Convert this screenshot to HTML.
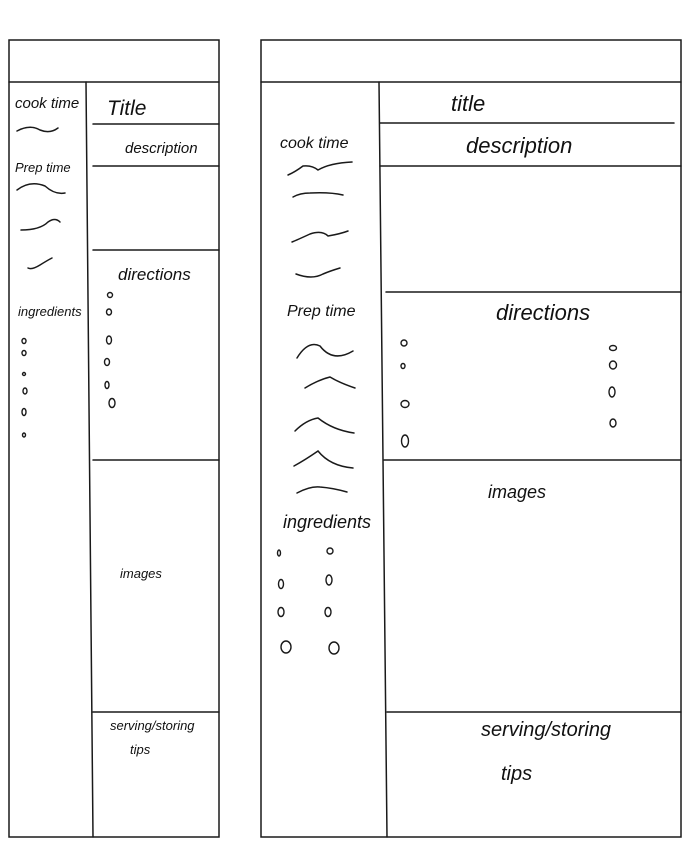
<!DOCTYPE html>
<html><head><meta charset="utf-8"><style>
html,body{margin:0;padding:0;background:#fff;width:694px;height:855px;overflow:hidden}
svg{display:block}
text{font-family:"Liberation Sans",sans-serif;fill:#111;font-style:italic}
</style></head><body>
<svg width="694" height="855" viewBox="0 0 694 855" xmlns="http://www.w3.org/2000/svg">
<g stroke="#1a1a1a" stroke-width="1.5" fill="none" stroke-linecap="round">
<!-- left panel -->
<rect x="9" y="40" width="210" height="797"/>
<line x1="9" y1="82" x2="219" y2="82"/>
<path d="M86 82 L93 837"/>
<line x1="93" y1="124" x2="219" y2="124"/>
<line x1="93" y1="166" x2="219" y2="166"/>
<line x1="93" y1="250" x2="219" y2="250"/>
<line x1="93" y1="460" x2="219" y2="460"/>
<line x1="93" y1="712" x2="219" y2="712"/>
<path d="M17 131 Q30 124 40 130 Q50 134 58 128"/>
<path d="M17 190 Q30 180 45 186 Q55 195 65 193"/>
<path d="M21 230 Q40 230 48 222 Q55 217 60 222"/>
<path d="M28 268 Q32 270 40 265 Q48 260 52 258"/>
<!-- right panel -->
<rect x="261" y="40" width="420" height="797"/>
<line x1="261" y1="82" x2="681" y2="82"/>
<path d="M379 82 L387 837"/>
<line x1="380" y1="123" x2="674" y2="123"/>
<line x1="380" y1="166" x2="681" y2="166"/>
<line x1="386" y1="292" x2="681" y2="292"/>
<line x1="384" y1="460" x2="681" y2="460"/>
<line x1="387" y1="712" x2="681" y2="712"/>
<path d="M288 175 Q295 172 303 166 Q312 165 318 170 Q330 163 352 162"/>
<path d="M293 197 Q300 193 310 193 Q330 192 343 195"/>
<path d="M292 242 Q297 240 310 234 Q322 230 328 236 Q340 234 348 231"/>
<path d="M296 274 Q312 280 323 274 Q330 271 340 268"/>
<path d="M297 358 Q308 340 320 346 Q333 363 353 351"/>
<path d="M305 388 Q318 380 330 377 Q340 383 355 388"/>
<path d="M295 431 Q306 420 318 418 Q333 430 354 433"/>
<path d="M294 466 Q305 460 318 451 Q330 466 353 468"/>
<path d="M297 493 Q310 486 320 487 Q333 488 347 492"/>
</g>
<g fill="none" stroke="#1a1a1a" stroke-width="1.4">
<ellipse cx="110" cy="295" rx="2.5" ry="2.5"/><ellipse cx="109" cy="312" rx="2.5" ry="3"/>
<ellipse cx="109" cy="340" rx="2.5" ry="4"/><ellipse cx="107" cy="362" rx="2.5" ry="3.5"/>
<ellipse cx="107" cy="385" rx="2" ry="3.5"/><ellipse cx="112" cy="403" rx="3" ry="4.5"/>
<ellipse cx="24" cy="341" rx="2" ry="2.5"/><ellipse cx="24" cy="353" rx="2" ry="2.5"/>
<ellipse cx="24" cy="374" rx="1.5" ry="1.5"/><ellipse cx="25" cy="391" rx="2" ry="3"/>
<ellipse cx="24" cy="412" rx="2" ry="3.5"/><ellipse cx="24" cy="435" rx="1.5" ry="2"/>
<ellipse cx="404" cy="343" rx="3" ry="3"/><ellipse cx="403" cy="366" rx="2" ry="2.5"/>
<ellipse cx="405" cy="404" rx="4" ry="3.5"/><ellipse cx="405" cy="441" rx="3.5" ry="6"/>
<ellipse cx="613" cy="348" rx="3.5" ry="2.5"/><ellipse cx="613" cy="365" rx="3.5" ry="4"/>
<ellipse cx="612" cy="392" rx="3" ry="5"/><ellipse cx="613" cy="423" rx="3" ry="4"/>
<ellipse cx="279" cy="553" rx="1.5" ry="3"/><ellipse cx="330" cy="551" rx="3" ry="3"/>
<ellipse cx="281" cy="584" rx="2.5" ry="4.5"/><ellipse cx="329" cy="580" rx="3" ry="5"/>
<ellipse cx="281" cy="612" rx="3" ry="4.5"/><ellipse cx="328" cy="612" rx="3" ry="4.5"/>
<ellipse cx="286" cy="647" rx="5" ry="6"/><ellipse cx="334" cy="648" rx="5" ry="6"/>
</g>
<text x="15" y="108" font-size="15">cook time</text>
<text x="107" y="115" font-size="21">Title</text>
<text x="125" y="153" font-size="15">description</text>
<text x="15" y="172" font-size="13">Prep time</text>
<text x="118" y="280" font-size="17">directions</text>
<text x="18" y="316" font-size="13">ingredients</text>
<text x="120" y="578" font-size="13">images</text>
<text x="110" y="730" font-size="13">serving/storing</text>
<text x="130" y="754" font-size="13">tips</text>
<text x="451" y="111" font-size="22">title</text>
<text x="466" y="153" font-size="22">description</text>
<text x="280" y="148" font-size="16">cook time</text>
<text x="287" y="316" font-size="16">Prep time</text>
<text x="496" y="320" font-size="22">directions</text>
<text x="488" y="498" font-size="18">images</text>
<text x="283" y="528" font-size="18">ingredients</text>
<text x="481" y="736" font-size="20">serving/storing</text>
<text x="501" y="780" font-size="20">tips</text>
</svg>
</body></html>
